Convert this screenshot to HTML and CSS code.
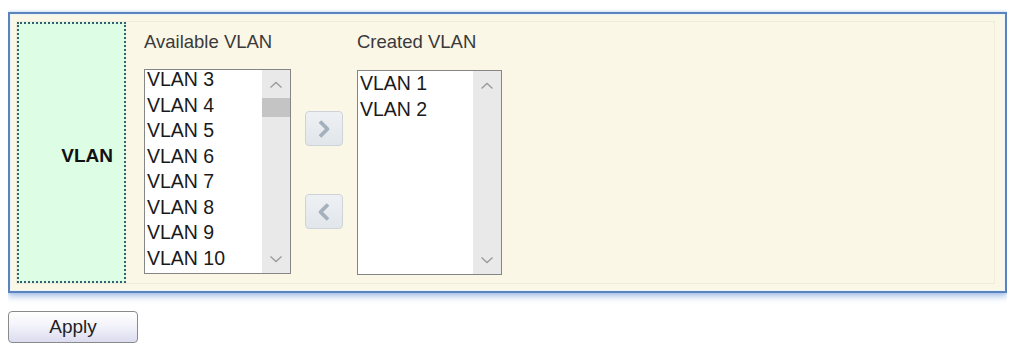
FILE: index.html
```html
<!DOCTYPE html>
<html>
<head>
<meta charset="utf-8">
<link rel="stylesheet" href="styles.css">
</head>
<body>
<div class="panel">
  <div class="row">
    <div class="label-cell"><span>VLAN</span></div>
    <div class="content">
      <div class="col">
        <div class="cap">Available VLAN</div>
        <div class="listbox">
          <ul class="items shifted">
            <li>VLAN 3</li><li>VLAN 4</li><li>VLAN 5</li><li>VLAN 6</li>
            <li>VLAN 7</li><li>VLAN 8</li><li>VLAN 9</li><li>VLAN 10</li>
          </ul>
          <div class="sbar">
            <svg class="arr up" width="14" height="8" viewBox="0 0 14 8"><path d="M1.5 6.5 L7 1.5 L12.5 6.5" fill="none" stroke="#9a9a9a" stroke-width="1.3"/></svg>
            <div class="thumb"></div>
            <div class="fill"></div>
            <svg class="arr down" width="14" height="8" viewBox="0 0 14 8"><path d="M1.5 1.5 L7 6.5 L12.5 1.5" fill="none" stroke="#9a9a9a" stroke-width="1.3"/></svg>
          </div>
        </div>
      </div>
      <div class="btns">
        <div class="mv mv1"><svg width="16" height="20" viewBox="0 0 16 20"><path d="M4 2.5 L11.5 10 L4 17.5" fill="none" stroke="#a4b0bb" stroke-width="3.8" stroke-linejoin="round"/></svg></div>
        <div class="mv mv2"><svg width="16" height="20" viewBox="0 0 16 20"><path d="M12 2.5 L4.5 10 L12 17.5" fill="none" stroke="#a4b0bb" stroke-width="3.8" stroke-linejoin="round"/></svg></div>
      </div>
      <div class="col">
        <div class="cap">Created VLAN</div>
        <div class="listbox lb2">
          <ul class="items">
            <li>VLAN 1</li><li>VLAN 2</li>
          </ul>
          <div class="sbar">
            <svg class="arr up" width="14" height="8" viewBox="0 0 14 8"><path d="M1.5 6.5 L7 1.5 L12.5 6.5" fill="none" stroke="#9a9a9a" stroke-width="1.3"/></svg>
            <div class="fill"></div>
            <svg class="arr down" width="14" height="8" viewBox="0 0 14 8"><path d="M1.5 1.5 L7 6.5 L12.5 1.5" fill="none" stroke="#9a9a9a" stroke-width="1.3"/></svg>
          </div>
        </div>
      </div>
    </div>
  </div>
</div>
<button class="apply">Apply</button>
</body>
</html>
```
FILE: styles.css
```css
html {
  overflow: hidden;
  background: #ffffff;
}
body {
  margin: 8px;
  font-family: "Liberation Sans", Arial, sans-serif;
  color: #222;
  overflow: hidden;
  height: 335px;
}
.panel {
  margin: 4px 0 0 0;
  height: 281px;
  box-sizing: border-box;
  border: 2px solid #5b84bd;
  background: #fbf7e7;
  box-shadow: 0 0 3px rgba(120, 165, 225, 0.55), 0 4px 6px rgba(90, 140, 210, 0.45), inset 0 0 0 1px #eaf5f8;
  padding: 7px 10px 7px 6px;
}
.row {
  display: flex;
  height: 100%;
  box-sizing: border-box;
  border: 1px solid #f1ecd9;
}
.label-cell {
  width: 109px;
  flex: none;
  box-sizing: border-box;
  border: 2px dotted #2f6170;
  background: #ddfde4;
  display: flex;
  align-items: center;
  justify-content: flex-end;
  padding: 6px 11px 0 0;
  font-weight: bold;
  font-size: 19px;
  color: #111;
}
.content {
  display: flex;
  margin-left: 18px;
}
.col {
  display: flex;
  flex-direction: column;
}
.cap {
  font-size: 18.5px;
  line-height: 22px;
  padding-top: 9px;
  color: #3a3a3a;
  height: 22px;
}
.listbox {
  margin-top: 16px;
  width: 147px;
  height: 205px;
  box-sizing: border-box;
  border: 1px solid #868686;
  background: #fff;
  display: flex;
  overflow: hidden;
}
.lb2 {
  margin-top: 17px;
  width: 145px;
}
.items {
  list-style: none;
  margin: 0;
  padding: 0 0 0 2px;
  flex: 1;
  font-size: 19.5px;
  line-height: 25.5px;
  color: #1a1a1a;
}
.items.shifted {
  margin-top: -3px;
}
.sbar {
  width: 28px;
  flex: none;
  background: #e9e9e9;
  display: flex;
  flex-direction: column;
  align-items: center;
}
.arr.up {
  margin-top: 11px;
  margin-bottom: 9px;
}
.arr.down {
  margin-bottom: 10px;
}
.thumb {
  width: 28px;
  height: 19px;
  background: #c4c4c4;
}
.fill {
  flex: 1;
}
.btns {
  width: 66px;
  display: flex;
  flex-direction: column;
  align-items: center;
}
.mv {
  width: 38px;
  height: 35px;
  box-sizing: border-box;
  border: 1px solid #cdd3d8;
  border-radius: 4px;
  background: linear-gradient(#eef1f4, #e1e6ea);
  display: flex;
  align-items: center;
  justify-content: center;
}
.mv1 {
  margin-top: 89px;
}
.mv2 {
  margin-top: 48px;
}
.apply {
  display: block;
  margin-top: 18px;
  width: 130px;
  height: 32px;
  border: 1px solid #8a8a8a;
  border-radius: 4px;
  background: linear-gradient(#ffffff 0%, #f3f3fa 45%, #dcdcf0 100%);
  font-family: "Liberation Sans", Arial, sans-serif;
  font-size: 19px;
  color: #222;
  padding: 0;
}
```
